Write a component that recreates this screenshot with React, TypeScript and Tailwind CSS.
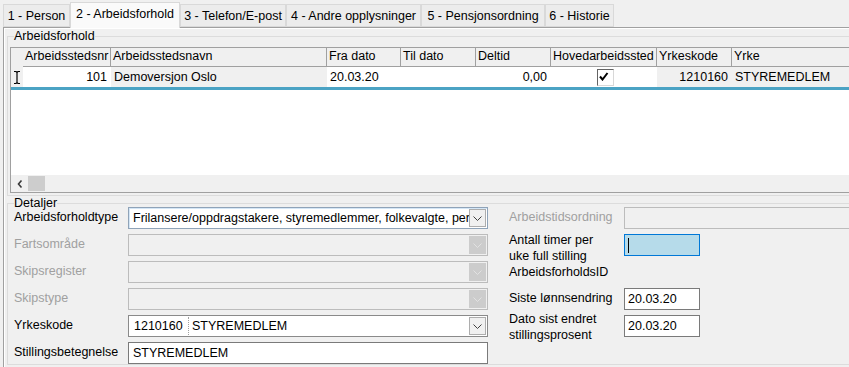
import React from 'react';

const tabs = [
    { label: '1 - Person', width: 'w-[67px]' },
    { label: '2 - Arbeidsforhold', width: 'w-[110px]', active: true },
    { label: '3 - Telefon/E-post', width: 'w-[106px]' },
    { label: '4 - Andre opplysninger', width: 'w-[135px]' },
    { label: '5 - Pensjonsordning', width: 'w-[124px]' },
    { label: '6 - Historie', width: 'w-[69px]' },
];

type Column = {
    label: string;
    width: string;
    value?: string;
    right?: boolean;
    readOnly?: boolean;
    check?: boolean;
};

const columns: Column[] = [
    { label: 'Arbeidsstedsnr', width: 'w-[88px]', value: '101', right: true },
    { label: 'Arbeidsstedsnavn', width: 'w-[216px]', value: 'Demoversjon Oslo', readOnly: true },
    { label: 'Fra dato', width: 'w-[74px]', value: '20.03.20' },
    { label: 'Til dato', width: 'w-[75px]', value: '' },
    { label: 'Deltid', width: 'w-[75px]', value: '0,00', right: true },
    { label: 'Hovedarbeidssted', width: 'w-[106px]', check: true },
    { label: 'Yrkeskode', width: 'w-[75px]', value: '1210160', right: true, readOnly: true },
    { label: 'Yrke', width: 'w-[140px]', value: 'STYREMEDLEM', readOnly: true },
];

function Chevron({ color }: { color: string }) {
    return (
        <svg width="9" height="5" viewBox="0 0 9 5">
            <path d="M0.5 0.5 L4.5 4.5 L8.5 0.5" fill="none" stroke={color} strokeWidth="1" />
        </svg>
    );
}

function Combo({ children, disabled, className = '' }: { children?: React.ReactNode; disabled?: boolean; className?: string }) {
    return (
        <div
            className={`flex h-[22px] items-stretch border ${disabled ? 'border-[#bcbcbc] bg-[#f0f0f0]' : 'border-[#8a8a8a] bg-white'} ${className}`}
        >
            <div className="flex min-w-0 flex-1 items-center overflow-hidden whitespace-nowrap pl-[4px]">{children}</div>
            <div
                className={`my-px mr-px flex w-[17px] shrink-0 items-center justify-center ${disabled ? 'bg-[#cccccc]' : 'border border-[#adadad] bg-[#f0f0f0]'}`}
            >
                <Chevron color={disabled ? '#e2e2e2' : '#404040'} />
            </div>
        </div>
    );
}

function TextBox({ value, className = '' }: { value?: string; className?: string }) {
    return (
        <div className={`flex h-[22px] items-center border border-[#7a7a7a] bg-white pl-[3px] ${className}`}>{value}</div>
    );
}

export default function App() {
    return (
        <div className="h-[367px] w-[849px] overflow-hidden bg-[#f0f0f0] font-['Liberation_Sans',Arial,sans-serif] text-[12.5px] text-black">
            {/* Tabs */}
            <div className="flex h-[27px] items-end pl-[3px]">
                {tabs.map((tab) =>
                    tab.active ? (
                        <div
                            key={tab.label}
                            className={`relative z-10 -mb-px flex h-[26px] ${tab.width} items-start justify-center border border-b-0 border-[#d9d9d9] bg-[#fafafa] pt-[4px] leading-[14px]`}
                        >
                            {tab.label}
                        </div>
                    ) : (
                        <div
                            key={tab.label}
                            className={`flex h-[23px] ${tab.width} items-center justify-center border border-[#d9d9d9] bg-[#ececec] leading-[14px]`}
                        >
                            {tab.label}
                        </div>
                    ),
                )}
            </div>

            {/* Page body */}
            <div className="ml-[3px] h-[340px] w-[900px] border-l border-t border-[#a0a0a0] shadow-[inset_1px_1px_0_#ffffff]">
                {/* Arbeidsforhold */}
                <fieldset className="ml-[3px] mt-[1px] w-[880px] border border-[#dcdcdc] pb-[2px] pl-[2px] pt-[4px]">
                    <legend className="ml-[4px] leading-[14px]">Arbeidsforhold</legend>
                    <div className="flex h-[146px] flex-col border-b border-l border-t border-[#a0a0a0] bg-white">
                        {/* header */}
                        <div className="flex h-[19px] shrink-0">
                            <div className="w-[12px] shrink-0 bg-[#f0f0f0]" />
                            {columns.map((col) => (
                                <div
                                    key={col.label}
                                    className={`${col.width} flex shrink-0 items-center overflow-hidden whitespace-nowrap border-b border-r border-[#a0a0a0] bg-[#f0f0f0] pb-px pl-[2px]`}
                                >
                                    {col.label}
                                </div>
                            ))}
                        </div>
                        {/* data row */}
                        <div className="flex h-[20px] shrink-0">
                            <div className="flex w-[12px] shrink-0 items-center justify-center bg-[#f0f0f0]">
                                <svg width="6" height="13" viewBox="0 0 6 13">
                                    <path d="M0 0.5 H2 L3 1.5 L4 0.5 H6 M3 1.5 V11.5 M0 12.5 H2 L3 11.5 L4 12.5 H6" fill="none" stroke="#000" strokeWidth="1.2" />
                                </svg>
                            </div>
                            {columns.map((col) => (
                                <div
                                    key={col.label}
                                    className={`${col.width} flex shrink-0 items-center overflow-hidden whitespace-nowrap ${col.readOnly ? 'bg-[#f0f0f0]' : 'bg-white'} ${col.right ? 'justify-end pr-[4px]' : 'pl-[3px]'} ${col.check ? 'justify-center' : ''}`}
                                >
                                    {col.check ? (
                                        <div className="flex h-[17px] w-[17px] items-center justify-center border border-b-[#d8d8d8] border-l-[#646464] border-r-[#d8d8d8] border-t-[#646464] bg-white">
                                            <svg width="10" height="9" viewBox="0 0 10 9" className="-ml-[3px] -mt-px">
                                                <path d="M1 4.5 L3.5 7.5 L8.5 1" fill="none" stroke="#000" strokeWidth="2" />
                                            </svg>
                                        </div>
                                    ) : (
                                        col.value
                                    )}
                                </div>
                            ))}
                        </div>
                        <div className="h-[3px] shrink-0 bg-[#4ba3c4]" />
                        <div className="flex-1 bg-white" />
                        {/* scrollbar */}
                        <div className="flex h-[17px] shrink-0 bg-[#f0f0f0]">
                            <div className="flex w-[17px] items-center justify-center">
                                <svg width="6" height="8" viewBox="0 0 6 8">
                                    <path d="M4.5 0.5 L1.5 4 L4.5 7.5" fill="none" stroke="#3a3a3a" strokeWidth="1.6" />
                                </svg>
                            </div>
                            <div className="my-px w-[17px] bg-[#cdcdcd]" />
                        </div>
                    </div>
                </fieldset>

                {/* Detaljer */}
                <fieldset className="ml-[3px] w-[880px] border border-[#dcdcdc] pl-[6px]">
                    <legend className="leading-[14px]">Detaljer</legend>
                    <div className="-mt-[3px] flex items-start">
                        <div className="grid grid-cols-[114px_360px] gap-y-[5px]">
                            <div className="flex h-[22px] items-center pb-px">Arbeidsforholdtype</div>
                            <Combo className="border-[#8fa3b8] shadow-[inset_1px_1px_0_#d4e6f6]">
                                Frilansere/oppdragstakere, styremedlemmer, folkevalgte, personer
                            </Combo>

                            <div className="flex h-[22px] items-center pb-px text-[#a0a0a0]">Fartsområde</div>
                            <Combo disabled />

                            <div className="flex h-[22px] items-center pb-px text-[#a0a0a0]">Skipsregister</div>
                            <Combo disabled />

                            <div className="flex h-[22px] items-center pb-px text-[#a0a0a0]">Skipstype</div>
                            <Combo disabled />

                            <div className="flex h-[22px] items-center pb-px">Yrkeskode</div>
                            <Combo className="border-[#7a7a7a]">
                                <span className="w-[55px] shrink-0 pl-px">1210160</span>
                                <span className="h-[18px] border-l border-dotted border-[#a0a0a0] pl-[3px] leading-[18px]">STYREMEDLEM</span>
                            </Combo>

                            <div className="flex h-[22px] items-center pb-px">Stillingsbetegnelse</div>
                            <TextBox value="STYREMEDLEM" className="pl-[4px]" />
                        </div>

                        <div className="ml-[21px] grid grid-cols-[115px_226px] grid-rows-[22px_22px_22px_22px_22px] gap-y-[5px]">
                            <div className="flex h-[22px] items-center pb-px text-[#a0a0a0]">Arbeidstidsordning</div>
                            <div className="h-[22px] border border-[#bcbcbc] bg-[#f0f0f0]" />

                            <div className="flex h-[22px] items-center pt-[5px] leading-[16px]">
                                <span>
                                    Antall timer per
                                    <br />
                                    uke full stilling
                                </span>
                            </div>
                            <div className="flex h-[22px] w-[76px] items-center border border-[#0078d7] bg-[#b6dbea] pl-[3px]">
                                <div className="h-[15px] w-px bg-black" />
                            </div>

                            <div className="flex h-[22px] items-center">ArbeidsforholdsID</div>
                            <div />

                            <div className="flex h-[22px] items-center pb-px">Siste lønnsendring</div>
                            <TextBox value="20.03.20" className="w-[76px]" />

                            <div className="flex h-[22px] items-center pt-px leading-[16px]">
                                <span>
                                    Dato sist endret
                                    <br />
                                    stillingsprosent
                                </span>
                            </div>
                            <TextBox value="20.03.20" className="w-[76px]" />
                        </div>
                    </div>
                </fieldset>
            </div>
        </div>
    );
}
